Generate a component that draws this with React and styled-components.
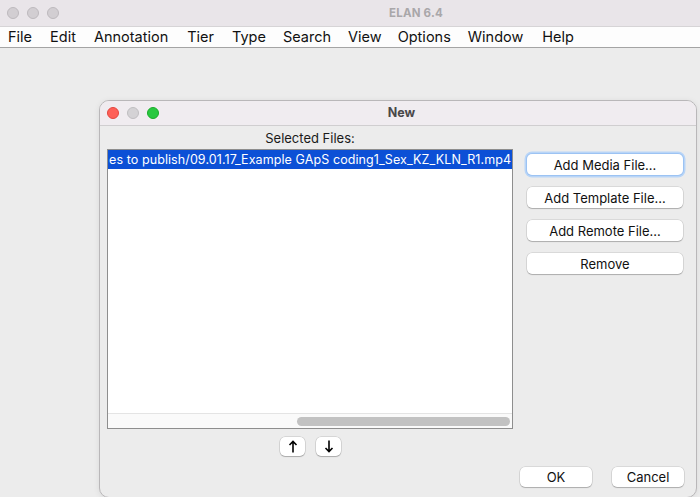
import React from "react";
import styled, { createGlobalStyle } from "styled-components";

const Global = createGlobalStyle`
  html, body { margin: 0; padding: 0; }
  body {
    width: 700px;
    height: 497px;
    overflow: hidden;
    background: #ececec;
    font-family: Inter, "Liberation Sans", sans-serif;
    color: #1a1a1a;
  }
`;

const Screen = styled.div`
  width: 700px;
  height: 497px;
  display: flex;
  flex-direction: column;
  overflow: hidden;
`;

const TitleBar = styled.div`
  height: 26px;
  flex: none;
  display: flex;
  align-items: center;
  padding-left: 7px;
  background: #e9e5e9;
  box-sizing: border-box;
`;

const Lights = styled.div`
  display: flex;
  gap: ${(p) => p.gap || 8}px;
`;

const Light = styled.span`
  width: 12px;
  height: 12px;
  border-radius: 50%;
  box-sizing: border-box;
  background: ${(p) => p.color};
  border: 0.5px solid ${(p) => p.edge};
`;

const AppTitle = styled.div`
  margin-left: 330px;
  font-size: 11.5px;
  font-weight: 700;
  color: #a9a7a9;
  letter-spacing: 0.2px;
`;

const MenuBar = styled.nav`
  height: 22px;
  flex: none;
  display: flex;
  align-items: center;
  padding-left: 8px;
  background: #fdfdfd;
  border-top: 1px solid #d6d4d6;
  border-bottom: 1px solid #a4a4a4;
  box-sizing: border-box;
`;

const MenuItem = styled.span`
  font-size: 14.5px;
  color: #111;
  margin-right: ${(p) => p.space}px;
  line-height: 20px;
`;

const Desk = styled.div`
  flex: 1;
  padding: 52px 0 0 99px;
`;

const Dialog = styled.div`
  width: 598px;
  height: 398px;
  box-sizing: border-box;
  border: 1px solid #b9b7b9;
  border-radius: 10px;
  background: #ececec;
  overflow: hidden;
  display: flex;
  flex-direction: column;
  box-shadow: 0 1px 6px rgba(0, 0, 0, 0.08);
`;

const DialogBar = styled.div`
  height: 25px;
  flex: none;
  box-sizing: border-box;
  display: flex;
  align-items: center;
  padding: 0 0 1px 7px;
  background: #f0ecf0;
  border-bottom: 1px solid #d0ced0;
`;

const DialogTitle = styled.div`
  flex: 1;
  text-align: center;
  margin-left: -52px;
  font-size: 12.5px;
  font-weight: 700;
  color: #4a484a;
`;

const Body = styled.div`
  flex: 1;
  display: grid;
  grid-template-columns: 406px 156px;
  column-gap: 14px;
  padding: 4px 0 0 7px;
`;

const LeftCol = styled.div`
  display: flex;
  flex-direction: column;
  align-items: center;
`;

const Label = styled.div`
  font-size: 13px;
  line-height: 17px;
  color: #1a1a1a;
  margin-bottom: 2px;
`;

const ListBox = styled.div`
  width: 406px;
  height: 280px;
  box-sizing: border-box;
  background: #fff;
  border: 1px solid #8e8e8e;
  display: flex;
  flex-direction: column;
`;

const Rows = styled.div`
  flex: 1;
  overflow: hidden;
`;

const Row = styled.div`
  height: 19px;
  line-height: 19px;
  padding-left: 1px;
  font-size: 12.5px;
  letter-spacing: 0.09px;
  white-space: nowrap;
  overflow: hidden;
  background: ${(p) => (p.selected ? "#0c50d6" : "transparent")};
  color: ${(p) => (p.selected ? "#fff" : "#111")};
`;

const HScroll = styled.div`
  height: 15px;
  flex: none;
  box-sizing: border-box;
  border-top: 1px solid #e4e4e4;
  background: #fafafa;
  display: flex;
  align-items: center;
  padding: 0 2px 0 189px;
`;

const Thumb = styled.div`
  flex: 1;
  height: 9px;
  border-radius: 5px;
  background: #c2c2c2;
`;

const ArrowRow = styled.div`
  display: flex;
  gap: 11px;
  margin-top: 8px;
  padding-left: 1px;
`;

const SmallBtn = styled.button`
  width: 25px;
  height: 19px;
  padding: 0;
  border: none;
  border-radius: 5px;
  background: #fff;
  box-shadow: 0 0 0 0.5px rgba(0, 0, 0, 0.18), 0 1px 1px rgba(0, 0, 0, 0.2);
  display: flex;
  align-items: center;
  justify-content: center;
`;

const RightCol = styled.div`
  display: flex;
  flex-direction: column;
  gap: 12px;
  padding-top: 24px;
`;

const Btn = styled.button`
  width: ${(p) => p.w || 156}px;
  height: ${(p) => p.h || 21}px;
  padding: 0;
  border: none;
  border-radius: 5px;
  background: #fff;
  font-family: Inter, "Liberation Sans", sans-serif;
  font-size: 13px;
  color: #111;
  box-shadow: ${(p) =>
    p.focused
      ? "0 0 0 1px #9cc3f3, 0 0 0 2.5px #b9d5f7"
      : "0 0 0 0.5px rgba(0,0,0,0.16), 0 1px 1px rgba(0,0,0,0.2)"};
`;

const Footer = styled.div`
  grid-column: 1 / -1;
  display: flex;
  justify-content: flex-end;
  gap: 20px;
  margin-right: -1px;
  padding-bottom: 10px;
  align-self: end;
`;

const Arrow = ({ up }) => (
  <svg width="10" height="13" viewBox="0 0 10 13">
    {up ? (
      <path d="M5 1.5V12.5M1.5 5L5 1.5L8.5 5" stroke="#000" strokeWidth="1.6" fill="none" />
    ) : (
      <path d="M5 0.5V11.5M1.5 8L5 11.5L8.5 8" stroke="#000" strokeWidth="1.6" fill="none" />
    )}
  </svg>
);

const menus = [
  ["File", 18],
  ["Edit", 18],
  ["Annotation", 19],
  ["Tier", 18],
  ["Type", 17],
  ["Search", 17],
  ["View", 16],
  ["Options", 17],
  ["Window", 19],
  ["Help", 0],
];

const sideButtons = ["Add Media File...", "Add Template File...", "Add Remote File...", "Remove"];

export default function App() {
  return (
    <Screen>
      <Global />
      <TitleBar>
        <Lights gap={8}>
          <Light color="#d2ced2" edge="#bdb9bd" />
          <Light color="#d2ced2" edge="#bdb9bd" />
          <Light color="#d2ced2" edge="#bdb9bd" />
        </Lights>
        <AppTitle>ELAN 6.4</AppTitle>
      </TitleBar>
      <MenuBar>
        {menus.map(([name, space]) => (
          <MenuItem key={name} space={space}>
            {name}
          </MenuItem>
        ))}
      </MenuBar>
      <Desk>
        <Dialog>
          <DialogBar>
            <Lights gap={8}>
              <Light color="#fe5f57" edge="#e2463f" />
              <Light color="#d4d2d5" edge="#bfbdc0" />
              <Light color="#28c840" edge="#1aab29" />
            </Lights>
            <DialogTitle>New</DialogTitle>
          </DialogBar>
          <Body>
            <LeftCol>
              <Label>Selected Files:</Label>
              <ListBox>
                <Rows>
                  <Row selected>es to publish/09.01.17_Example GApS coding1_Sex_KZ_KLN_R1.mp4</Row>
                </Rows>
                <HScroll>
                  <Thumb />
                </HScroll>
              </ListBox>
              <ArrowRow>
                <SmallBtn aria-label="Move up">
                  <Arrow up />
                </SmallBtn>
                <SmallBtn aria-label="Move down">
                  <Arrow />
                </SmallBtn>
              </ArrowRow>
            </LeftCol>
            <RightCol>
              {sideButtons.map((label, i) => (
                <Btn key={label} focused={i === 0}>
                  {label}
                </Btn>
              ))}
            </RightCol>
            <Footer>
              <Btn w={72} h={20}>OK</Btn>
              <Btn w={72} h={20}>Cancel</Btn>
            </Footer>
          </Body>
        </Dialog>
      </Desk>
    </Screen>
  );
}
